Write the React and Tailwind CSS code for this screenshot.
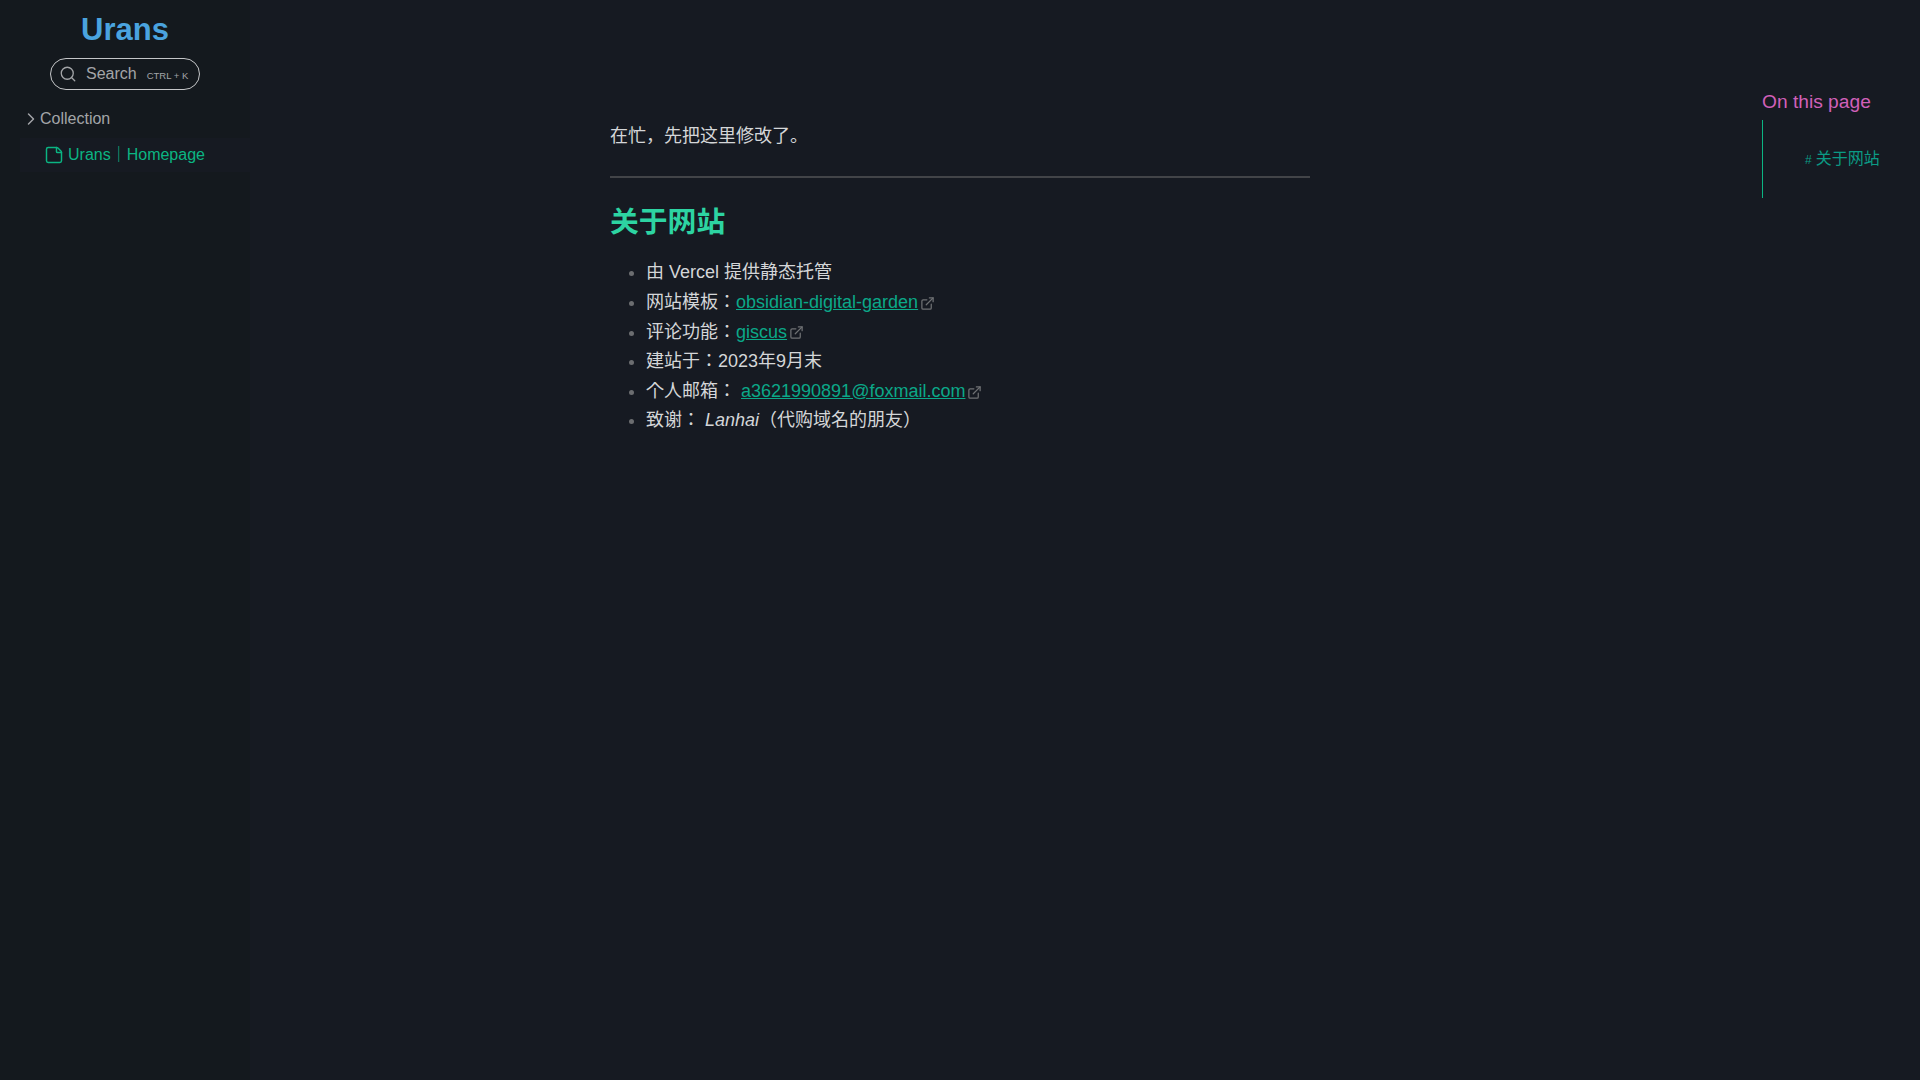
import { ChevronRight, Search, StickyNote, ExternalLink } from 'lucide-react'

const FONT = "font-['Liberation_Sans','Noto_Sans_CJK_KR',sans-serif]"

function Link({ href, children }) {
  return (
    <a href={href} className="inline-flex items-center text-[#0ba888] underline">
      {children}
      <ExternalLink className="ml-[2px] mt-[1px] h-[15px] w-[15px] text-[#6f7174]" strokeWidth={2} />
    </a>
  )
}

const ITEMS = [
  <>由 Vercel 提供静态托管</>,
  <>网站模板：<Link href="#">obsidian-digital-garden</Link></>,
  <>评论功能：<Link href="#">giscus</Link></>,
  <>建站于：2023年9月末</>,
  <>个人邮箱： <Link href="#">a3621990891@foxmail.com</Link></>,
  <>致谢： <em>Lanhai</em>（代购域名的朋友）</>,
]

export default function App() {
  return (
    <div className={`flex h-[1080px] w-full overflow-hidden bg-[#161a22] ${FONT}`}>
      <aside className="flex w-[250px] shrink-0 flex-col bg-[#14191e]">
        <h1 className="mt-[12px] text-center text-[31px] font-bold leading-[36px] text-[#4aa3df]">Urans</h1>
        <div className="mx-auto mt-[10px] flex h-[32px] w-[150px] items-center rounded-full border border-[#c4c6c8] pl-[8px] text-[#a3a5a8]">
          <Search className="h-[18px] w-[18px]" strokeWidth={1.75} />
          <span className="ml-[9px] text-[16px]">Search</span>
          <span className="ml-[10px] mt-[5px] text-[9.5px]">CTRL + K</span>
        </div>
        <div className="mt-[17px] flex h-[24px] items-center pl-[21px] text-[16px] text-[#a3a5a8]">
          <ChevronRight className="h-[20px] w-[20px]" strokeWidth={1.75} />
          <span className="-ml-[1px]">Collection</span>
        </div>
        <div className="ml-[20px] mt-[7px] flex h-[34px] items-center bg-[#161a22] pl-[24px] text-[16px] text-[#0bb583]">
          <StickyNote className="h-[20px] w-[20px]" strokeWidth={1.75} />
          <span className="ml-[4px]">Urans｜Homepage</span>
        </div>
      </aside>

      <main className="flex-1 pl-[360px] pt-[121px]">
        <div className="w-[700px] text-[18px] leading-[28px] text-[#d4d6d8]">
          <p className="pt-[1px]">在忙，先把这里修改了。</p>
          <hr className="mt-[26px] h-[2px] border-0 bg-[#424448]" />
          <h2 className="mt-[26px] text-[28.8px] font-bold leading-[36px] text-[#2dd4a2]">关于网站</h2>
          <ul className="mt-[18.4px] list-disc pl-[36px] marker:text-[#6b6d70]">
            {ITEMS.map((item, i) => (
              <li key={i} className="h-[29.6px] leading-[29.6px]">{item}</li>
            ))}
          </ul>
        </div>
      </main>

      <aside className="w-[158px] shrink-0 pt-[88px]">
        <h3 className="text-[19.2px] leading-[28px] text-[#d160b9]">On this page</h3>
        <div className="mt-[4px] h-[78px] border-l border-[#0bb583] pl-[42px] pt-[27px] text-[16px] leading-[24px] text-[#0b9a85]">
          <span className="mr-[4px] text-[12px]">#</span>关于网站
        </div>
      </aside>
    </div>
  )
}
